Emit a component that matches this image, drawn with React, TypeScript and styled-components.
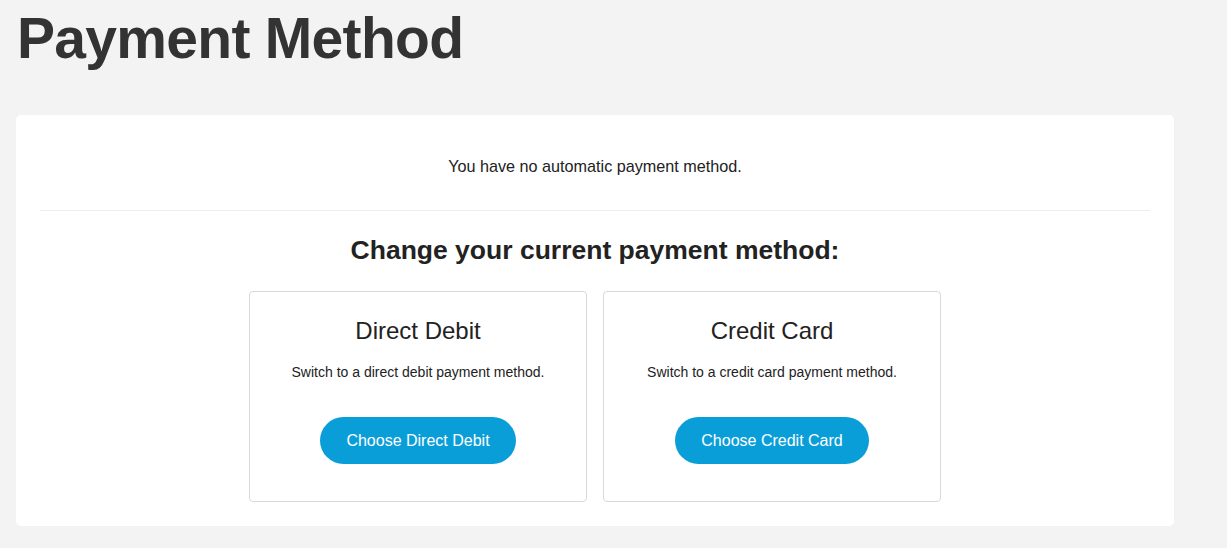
import styled, { createGlobalStyle } from "styled-components";

const GlobalStyle = createGlobalStyle`
  html, body {
    margin: 0;
    padding: 0;
    background: #f3f3f3;
    font-family: "Liberation Sans", Arial, sans-serif;
    color: #222;
  }
`;

interface Method {
  title: string;
  description: string;
  action: string;
}

const methods: Method[] = [
  {
    title: "Direct Debit",
    description: "Switch to a direct debit payment method.",
    action: "Choose Direct Debit",
  },
  {
    title: "Credit Card",
    description: "Switch to a credit card payment method.",
    action: "Choose Credit Card",
  },
];

export default function App() {
  return (
    <>
      <GlobalStyle />
      <Page>
        <PageTitle>Payment Method</PageTitle>
        <Panel>
          <StatusText>You have no automatic payment method.</StatusText>
          <Divider />
          <SectionTitle>Change your current payment method:</SectionTitle>
          <OptionRow>
            {methods.map((m) => (
              <OptionCard key={m.title}>
                <OptionTitle>{m.title}</OptionTitle>
                <OptionText>{m.description}</OptionText>
                <ChooseButton>{m.action}</ChooseButton>
              </OptionCard>
            ))}
          </OptionRow>
        </Panel>
      </Page>
    </>
  );
}

const Page = styled.div`
  width: 1158px;
  padding: 0 0 22px 16px;
`;

const PageTitle = styled.h1`
  margin: 0;
  padding: 5px 0 0 1px;
  height: 115px;
  box-sizing: border-box;
  font-size: 57px;
  line-height: 66px;
  letter-spacing: -0.7px;
  font-weight: bold;
  color: #333;
`;

const Panel = styled.section`
  background: #fff;
  border-radius: 5px;
  padding: 24px;
  display: flex;
  flex-direction: column;
  align-items: center;
`;

const StatusText = styled.p`
  margin: 18px 0 0;
  font-size: 16.2px;
  line-height: 18px;
  color: #222;
`;

const Divider = styled.hr`
  align-self: stretch;
  margin: 35px 0 0;
  border: 0;
  border-top: 1px solid #eeeeee;
`;

const SectionTitle = styled.h2`
  margin: 24px 0 0;
  font-size: 26.5px;
  line-height: 30px;
  font-weight: bold;
  color: #222;
`;

const OptionRow = styled.div`
  display: flex;
  gap: 16px;
  margin-top: 26px;
`;

const OptionCard = styled.div`
  width: 338px;
  height: 211px;
  box-sizing: border-box;
  border: 1px solid #d9d9d9;
  border-radius: 4px;
  display: flex;
  flex-direction: column;
  align-items: center;
  padding-top: 25px;
`;

const OptionTitle = styled.h3`
  margin: 0;
  font-size: 24px;
  line-height: 28px;
  font-weight: normal;
  color: #222;
`;

const OptionText = styled.p`
  margin: 19px 0 0;
  font-size: 14px;
  line-height: 16px;
  color: #222;
`;

const ChooseButton = styled.button`
  margin-top: 37px;
  height: 47px;
  padding: 0 26px;
  border: 0;
  border-radius: 24px;
  background: #0a9ed9;
  color: #fff;
  font-family: "Liberation Sans", Arial, sans-serif;
  font-size: 16px;
  cursor: pointer;
`;
